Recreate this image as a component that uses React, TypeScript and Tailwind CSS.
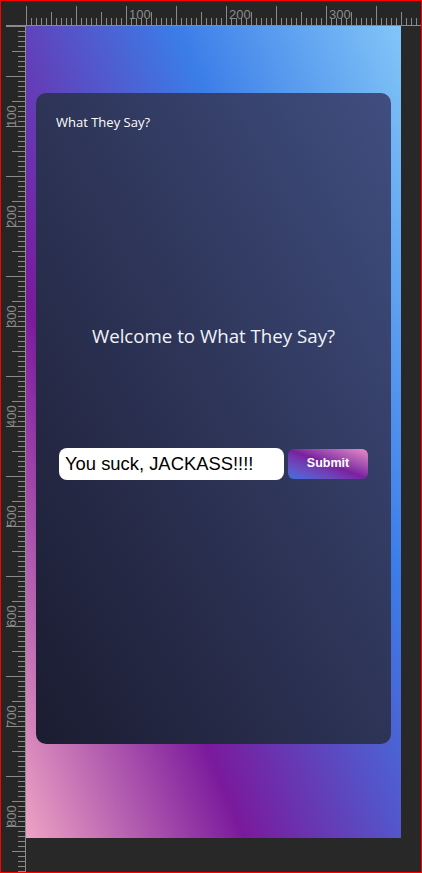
import React from "react";

const TICKS = Array.from({ length: 80 }, (_, n) => n);
const VTICKS = Array.from({ length: 170 }, (_, n) => n);

const tickLen = (n: number) => {
  if (n % 10 === 0) return 19;
  if (n % 5 === 0) return 13;
  return 7;
};

const TopRuler = () => (
  <svg width="420" height="25" className="col-span-2 block">
    <line x1="5" y1="24.5" x2="420" y2="24.5" stroke="#8a8a8a" strokeWidth="1" />
    {TICKS.map((n) => {
      const x = 25.5 + n * 5;
      return (
        <line key={n} x1={x} y1={24 - tickLen(n)} x2={x} y2={24} stroke="#8a8a8a" strokeWidth="1" />
      );
    })}
    {[1, 2, 3].map((k) => (
      <text
        key={k}
        x={25 + k * 100 + 3}
        y={17.5}
        fontSize="13"
        fill="#8a8a8a"
        fontFamily="'Liberation Sans', Arial, sans-serif"
      >
        {k * 100}
      </text>
    ))}
  </svg>
);

const LeftRuler = () => (
  <svg width="25" height="846" className="block">
    <line x1="24.5" y1="0" x2="24.5" y2="846" stroke="#8a8a8a" strokeWidth="1" />
    {VTICKS.map((n) => {
      const y = 0.5 + n * 5;
      return (
        <line key={n} x1={24 - tickLen(n)} y1={y} x2={25} y2={y} stroke="#8a8a8a" strokeWidth="1" />
      );
    })}
    {[1, 2, 3, 4, 5, 6, 7, 8].map((k) => {
      const y0 = k * 100 + 1;
      return (
        <text
          key={k}
          x={15}
          y={y0}
          transform={`rotate(-90 15 ${y0})`}
          fontSize="13"
          fill="#8a8a8a"
          fontFamily="'Liberation Sans', Arial, sans-serif"
        >
          {k * 100}
        </text>
      );
    })}
  </svg>
);

const Card = () => (
  <div className="flex h-[651px] w-[355px] flex-col rounded-[10px] bg-linear-to-tr from-[#1b1c31] to-[#404e80] p-5 font-['Open_Sans',sans-serif]">
    <h2 className="text-[13px] font-medium text-white">What They Say?</h2>
    <h1 className="mt-[189px] text-center text-[18.7px] text-[#f1f3f9]">
      Welcome to What They Say?
    </h1>
    <form className="mt-[98px] flex items-center justify-center gap-1" onSubmit={(e) => e.preventDefault()}>
      <input
        type="text"
        value="You suck, JACKASS!!!!"
        readOnly
        className="h-8 w-[225px] rounded-lg bg-white px-1.5 font-['Liberation_Sans',Arial,sans-serif] text-[18.4px] text-black outline-none"
      />
      <button
        type="submit"
        className="h-[30px] w-20 rounded-md bg-linear-to-tr from-[#3a6fe2] via-[#7a1fa0] to-[#ea8dc6] font-['Liberation_Sans',Arial,sans-serif] text-[12.5px] font-bold text-white"
      >
        Submit
      </button>
    </form>
  </div>
);

export default function App() {
  return (
    <div className="grid h-[873px] w-[422px] grid-cols-[25px_395px] grid-rows-[25px_846px] overflow-hidden border border-[#ff0000] bg-[#262626]">
      <TopRuler />
      <LeftRuler />
      <div className="bg-[#282828]">
        <div className="flex h-[812px] w-[375px] flex-col bg-[linear-gradient(68deg,#eea3c3_0%,#7a1a9c_31%,#3b7de8_68%,#82c6f8_100%)] px-[10px] pt-[67px]">
          <Card />
        </div>
      </div>
    </div>
  );
}
